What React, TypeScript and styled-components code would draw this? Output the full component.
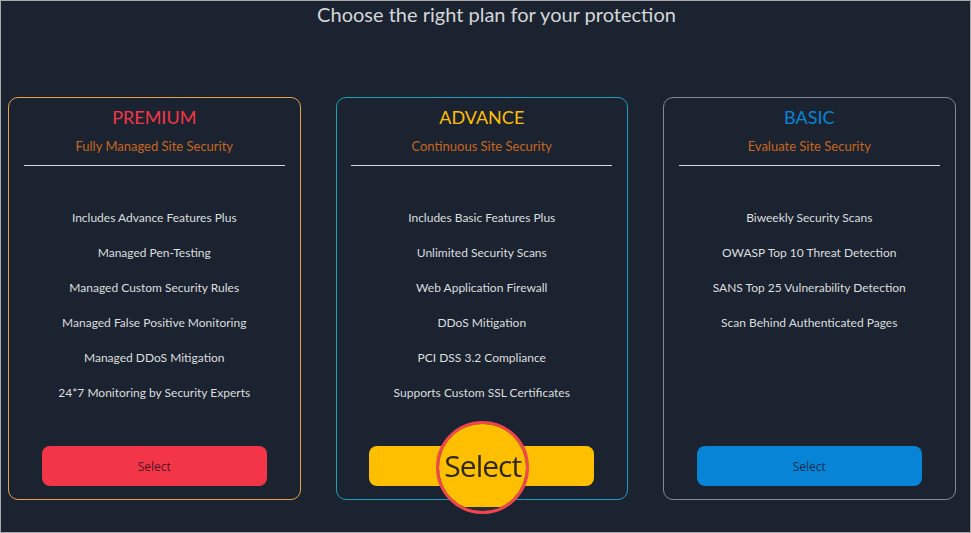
import React from "react";
import styled, { createGlobalStyle } from "styled-components";

type Plan = {
  name: string;
  tagline: string;
  accent: string;
  border: string;
  features: string[];
  zoomed?: boolean;
};

const plans: Plan[] = [
  {
    name: "PREMIUM",
    tagline: "Fully Managed Site Security",
    accent: "#f33647",
    border: "#e9a24c",
    features: [
      "Includes Advance Features Plus",
      "Managed Pen-Testing",
      "Managed Custom Security Rules",
      "Managed False Positive Monitoring",
      "Managed DDoS Mitigation",
      "24*7 Monitoring by Security Experts",
    ],
  },
  {
    name: "ADVANCE",
    tagline: "Continuous Site Security",
    accent: "#fdbf00",
    border: "#1c9fbf",
    zoomed: true,
    features: [
      "Includes Basic Features Plus",
      "Unlimited Security Scans",
      "Web Application Firewall",
      "DDoS Mitigation",
      "PCI DSS 3.2 Compliance",
      "Supports Custom SSL Certificates",
    ],
  },
  {
    name: "BASIC",
    tagline: "Evaluate Site Security",
    accent: "#0784d6",
    border: "#7d8b99",
    features: [
      "Biweekly Security Scans",
      "OWASP Top 10 Threat Detection",
      "SANS Top 25 Vulnerability Detection",
      "Scan Behind Authenticated Pages",
    ],
  },
];

export default function App() {
  return (
    <>
      <GlobalStyle />
      <Frame>
        <Heading>Choose the right plan for your protection</Heading>
        <Cards>
          {plans.map((plan) => (
            <Card key={plan.name} $border={plan.border}>
              <PlanName $color={plan.accent}>{plan.name}</PlanName>
              <Tagline>{plan.tagline}</Tagline>
              <Divider />
              <Features>
                {plan.features.map((f) => (
                  <Feature key={f}>{f}</Feature>
                ))}
              </Features>
              <ButtonWrap>
                <SelectButton $color={plan.accent}>Select</SelectButton>
                {plan.zoomed && (
                  <Lens aria-hidden="true">
                    <LensFill $color={plan.accent}>Select</LensFill>
                  </Lens>
                )}
              </ButtonWrap>
            </Card>
          ))}
        </Cards>
      </Frame>
    </>
  );
}

// Styled Components
const GlobalStyle = createGlobalStyle`
  html, body {
    margin: 0;
    padding: 0;
    background-color: #1b2330;
  }
`;

const Frame = styled.div`
  width: 971px;
  height: 533px;
  box-sizing: border-box;
  border: 1px solid #a9a9a9;
  background-color: #1b2330;
  font-family: Lato, "Open Sans", sans-serif;
  overflow: hidden;
`;

const Heading = styled.h1`
  margin: 2px 0 0 0;
  padding-left: 22px;
  text-align: center;
  font-size: 20px;
  font-weight: 400;
  line-height: 22px;
  color: #d4d6d8;
`;

const Cards = styled.div`
  display: flex;
  gap: 35px;
  margin-top: 72px;
  padding-left: 7px;
`;

const Card = styled.div<{ $border: string }>`
  width: 292.5px;
  height: 403px;
  box-sizing: border-box;
  border: 1px solid ${(p) => p.$border};
  border-radius: 10px;
  display: flex;
  flex-direction: column;
  align-items: center;
`;

const PlanName = styled.div<{ $color: string }>`
  margin-top: 8px;
  font-size: 18px;
  line-height: 22px;
  color: ${(p) => p.$color};
`;

const Tagline = styled.div`
  margin-top: 9px;
  font-size: 13px;
  line-height: 18px;
  color: #c7661f;
`;

const Divider = styled.div`
  width: 261px;
  margin-top: 10px;
  border-top: 1px solid #d6d8da;
`;

const Features = styled.div`
  display: flex;
  flex-direction: column;
  align-items: center;
  margin-top: 44px;
  gap: 19px;
`;

const Feature = styled.div`
  font-size: 12px;
  line-height: 16px;
  color: #dcdedf;
`;

const ButtonWrap = styled.div`
  position: relative;
  margin-top: auto;
  margin-bottom: 13px;
`;

const SelectButton = styled.button<{ $color: string }>`
  width: 225px;
  height: 40px;
  border: none;
  border-radius: 8px;
  background-color: ${(p) => p.$color};
  color: rgba(10, 10, 20, 0.75);
  font-family: "Open Sans", "Noto Sans", sans-serif;
  font-size: 12px;
  cursor: pointer;
`;

const Lens = styled.div`
  position: absolute;
  left: 50%;
  top: 50%;
  width: 93px;
  height: 93px;
  box-sizing: border-box;
  margin: -45px 0 0 -45.5px;
  border: 3px solid #f2464f;
  border-radius: 50%;
  overflow: hidden;
  background-color: #2a2c33;
`;

const LensFill = styled.div<{ $color: string }>`
  height: 83px;
  background-color: ${(p) => p.$color};
  display: flex;
  align-items: center;
  justify-content: center;
  color: #2e2810;
  font-family: "Open Sans", "Noto Sans", sans-serif;
  font-size: 30px;
  letter-spacing: -1px;
  filter: blur(0.5px);
`;
